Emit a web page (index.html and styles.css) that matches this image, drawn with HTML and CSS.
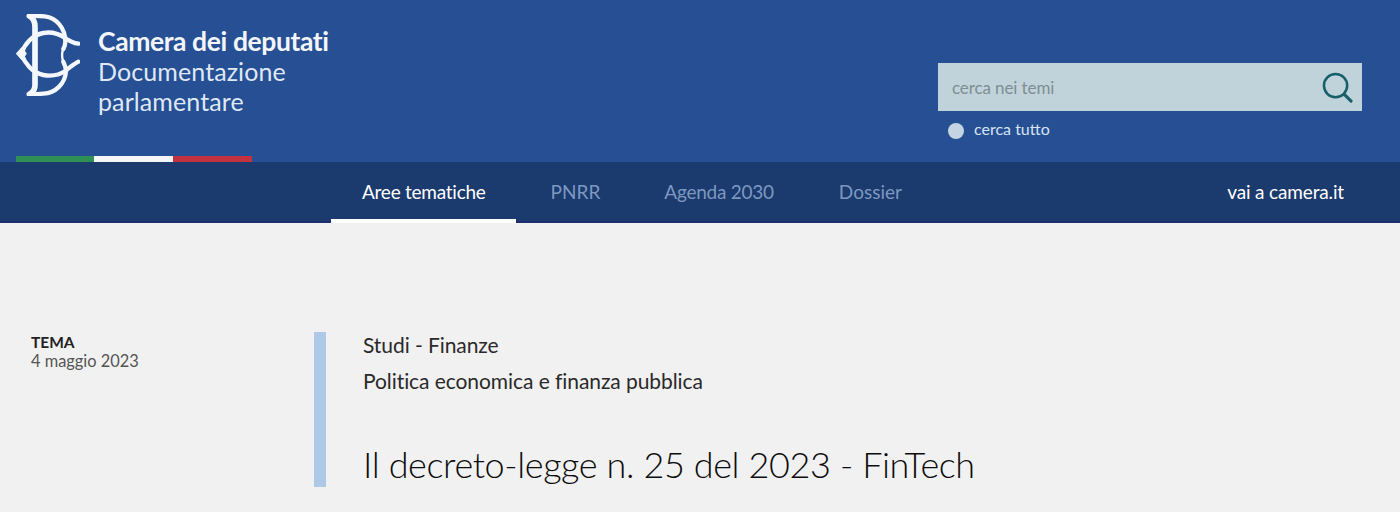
FILE: index.html
```html
<!DOCTYPE html>
<html lang="it">
<head>
<meta charset="utf-8">
<title>Il decreto-legge n. 25 del 2023 - FinTech</title>
<link rel="stylesheet" href="styles.css">
</head>
<body>
<header class="masthead">
  <div class="brand">
    <div class="brand-main">
      <svg class="emblem" viewBox="18 27 192 246" aria-hidden="true">
        <g fill="none" stroke="#f4f7fb" stroke-linecap="round" stroke-linejoin="round">
          <path d="M58 33 C72 40 75 50 75 66 L75 240 C75 252 70 262 58 268" stroke-width="17"/>
          <path d="M60 32 L104 34 C140 38 166 70 166 110 C166 118 163 126 160 132" stroke-width="13"/>
          <path d="M160 170 C164 178 168 188 168 198 C166 236 136 264 100 266 L60 269" stroke-width="13"/>
          <path d="M205 116 C190 114 178 108 164 98 C146 86 122 80 100 84 C66 90 44 118 34 146 C44 174 66 204 100 210 C124 214 148 210 166 198 C178 188 190 178 205 170" stroke-width="13"/>
          <path d="M20 146 L36 128 L48 146 L36 164 Z" fill="#f4f7fb" stroke-width="4"/>
          <path d="M160 132 C155 142 155 160 160 170" stroke-width="7"/>
        </g>
      </svg>
      <div class="brand-text">
        <div class="brand-title">Camera dei deputati</div>
        <div class="brand-sub">Documentazione<br>parlamentare</div>
      </div>
    </div>
    <div class="flag"><span class="flag-g"></span><span class="flag-w"></span><span class="flag-r"></span></div>
  </div>
  <div class="search-area">
    <form class="search">
      <span class="search-ph">cerca nei temi</span>
      <svg class="search-icon" viewBox="0 0 32 32" aria-hidden="true">
        <circle cx="14" cy="14" r="12" fill="none" stroke="#17606a" stroke-width="2.6"/>
        <path d="M23 23 L30 30" stroke="#17606a" stroke-width="3.2" stroke-linecap="round"/>
      </svg>
    </form>
    <div class="scope"><span class="radio"></span><span>cerca tutto</span></div>
  </div>
</header>
<nav class="mainnav">
  <div class="tabs">
    <a class="tab tab-active">Aree tematiche</a>
    <a class="tab">PNRR</a>
    <a class="tab">Agenda 2030</a>
    <a class="tab">Dossier</a>
  </div>
  <a class="ext">vai a camera.it</a>
</nav>
<main class="content">
  <aside class="meta">
    <div class="meta-kind">TEMA</div>
    <div class="meta-date">4 maggio 2023</div>
  </aside>
  <section class="article">
    <p class="crumb">Studi - Finanze</p>
    <p class="crumb">Politica economica e finanza pubblica</p>
    <h1 class="title">Il decreto-legge n. 25 del 2023 - FinTech</h1>
  </section>
</main>
</body>
</html>
```
FILE: styles.css
```css
* { box-sizing: border-box; }
html, body { margin: 0; padding: 0; height: 512px; overflow: hidden; }
body { background: #f1f1f1; font-family: Lato, "Open Sans", sans-serif; color: #1d1d1d; }

.masthead { height: 162px; background: #264f94; display: flex; justify-content: space-between; }
.brand { margin-left: 16px; display: flex; flex-direction: column; justify-content: space-between; }
.brand-main { display: flex; padding-top: 14px; }
.emblem { width: 64px; height: 82px; flex: none; }
.brand-text { margin-left: 18px; padding-top: 12px; color: #f2f6fb; }
.brand-title { font-size: 26.5px; line-height: 30px; font-weight: 700; letter-spacing: -0.4px; white-space: nowrap; }
.brand-sub { font-size: 25px; line-height: 30px; font-weight: 400; color: #dfe8f4; letter-spacing: 0.1px; }
.flag { display: flex; width: 236px; height: 6px; }
.flag-g { flex: 78px 0 0; background: #2f8f55; }
.flag-w { flex: 79px 0 0; background: #f5f5f5; }
.flag-r { flex: 79px 0 0; background: #c5323f; }

.search-area { width: 424px; margin-right: 38px; padding-top: 63px; }
.search { height: 48px; background: #c1d3da; display: flex; align-items: center; justify-content: space-between; padding: 0 9px 0 14px; }
.search-ph { font-size: 17px; color: #7d8e92; letter-spacing: -0.1px; }
.search-icon { width: 31px; height: 31px; }
.scope { display: flex; align-items: flex-start; margin-top: 7px; padding-left: 10px; font-size: 16px; line-height: 22px; color: #d6e4f2; }
.radio { width: 16px; height: 16px; border-radius: 50%; background: #c4d4e2; margin: 5px 10px 0 0; }

.mainnav { height: 61px; background: #1b3a6d; border-bottom: 2px solid #1b2f6e; display: flex; justify-content: space-between; padding-left: 331px; padding-right: 56px; }
.tabs { display: flex; }
.tab { display: block; height: 61px; padding: 17px 0 0; font-size: 19px; line-height: 26px; letter-spacing: -0.25px; color: #7d98c0; margin-right: 65px; }
.tab:nth-child(2) { letter-spacing: 0; margin-right: 64px; }
.tab:nth-child(4) { letter-spacing: 0; }
.tab-active { color: #fff; padding-left: 31px; padding-right: 30px; margin-right: 35px; border-bottom: 4px solid #fff; }
.ext { font-size: 19px; line-height: 26px; letter-spacing: -0.15px; padding-top: 17px; color: #fff; }

.content { display: flex; padding: 109px 0 0 31px; }
.meta { width: 283px; flex: none; }
.meta-kind { font-size: 15.5px; line-height: 20px; font-weight: 700; color: #222; }
.meta-date { font-size: 16.4px; line-height: 18px; color: #555; }
.article { border-left: 12px solid #aec8e8; padding-left: 37px; height: 155px; }
.crumb { margin: 0 0 10px; font-size: 21px; line-height: 26px; letter-spacing: -0.07px; color: #2a2a2a; }
.title { margin: 48px 0 0; font-size: 36px; line-height: 44px; font-weight: 300; letter-spacing: -0.39px; color: #0c0c0c; white-space: nowrap; }
```
